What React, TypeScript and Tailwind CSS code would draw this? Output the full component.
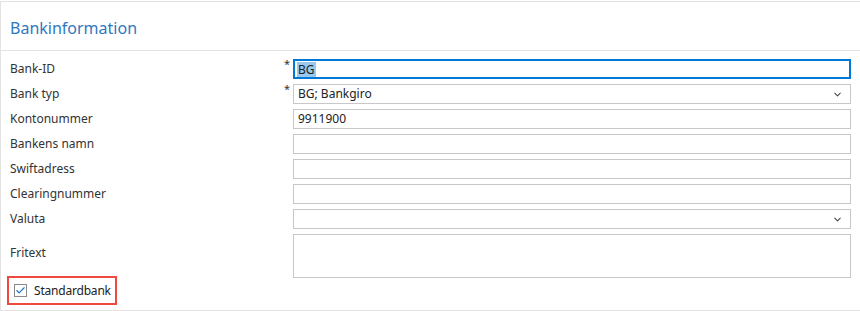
import { Check, ChevronDown } from "lucide-react";

const font = { fontFamily: '"Segoe UI", "Noto Sans", sans-serif' };

type Field = {
  label: string;
  required?: boolean;
  value?: string;
  kind?: "text" | "select" | "area";
  focused?: boolean;
};

const fields: Field[] = [
  { label: "Bank-ID", required: true, value: "BG", focused: true },
  { label: "Bank typ", required: true, value: "BG; Bankgiro", kind: "select" },
  { label: "Kontonummer", value: "9911900" },
  { label: "Bankens namn" },
  { label: "Swiftadress" },
  { label: "Clearingnummer" },
  { label: "Valuta", kind: "select" },
  { label: "Fritext", kind: "area" },
];

function FieldRow({ f }: { f: Field }) {
  const area = f.kind === "area";
  return (
    <div className={`flex ${area ? "h-[44px] items-start" : "h-[20px] items-center"}`}>
      <div className={`w-[274px] pl-[9px] text-[12px] text-[#333] ${area ? "pt-[10px]" : ""}`}>{f.label}</div>
      <div className="w-[18px] h-full text-[11px] text-[#333] pl-[9px] leading-[10px]">{f.required ? "*" : ""}</div>
      {f.focused ? (
        <div className="flex-1 h-full mr-[9px] border-2 border-[#0078d7] bg-white flex items-center pl-[2px]">
          <span className="bg-[#99c9ef] text-[12px] text-[#222] px-[1px] leading-[15px]">{f.value}</span>
        </div>
      ) : (
        <div
          className={`flex-1 h-full mr-[9px] border border-[#c8c8c8] bg-white flex ${
            area ? "items-start" : "items-center"
          } pl-[4px] pr-[7px]`}
        >
          <span className="flex-1 text-[12px] text-[#222]">{f.value ?? ""}</span>
          {f.kind === "select" && <ChevronDown className="w-[11px] h-[11px] text-[#444]" strokeWidth={2.2} />}
        </div>
      )}
    </div>
  );
}

export default function App() {
  return (
    <div className="w-[860px] h-[311px] bg-white pt-px" style={font}>
      <div className="h-[310px] border-t border-l border-b border-[#e3e3e3] flex flex-col">
        <div className="h-[49px] border-b border-[#e3e3e3] flex items-center pl-[9px] pt-[3px]">
          <span className="text-[16px] text-[#2f78bd]">Bankinformation</span>
        </div>
        <div className="pt-[8px] flex flex-col gap-[5px]">
          {fields.map((f) => (
            <FieldRow key={f.label} f={f} />
          ))}
        </div>
        <div className="pl-[6px] -mt-[2px]">
          <div className="inline-flex items-center h-[29px] border-2 border-[#f0493f] pl-[5px] pr-[4px] gap-[7px]">
            <div className="w-[13px] h-[13px] border border-[#8a8a8a] bg-white flex items-center justify-center">
              <Check className="w-[11px] h-[11px] text-[#1a73c8]" strokeWidth={2.5} />
            </div>
            <span className="text-[12px] text-[#222] tracking-[-0.2px]">Standardbank</span>
          </div>
        </div>
      </div>
    </div>
  );
}
